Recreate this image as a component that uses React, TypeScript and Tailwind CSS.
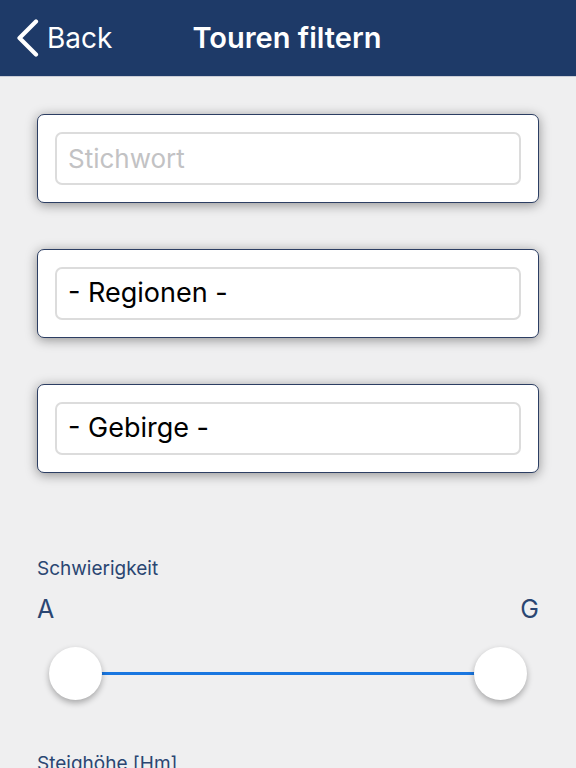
function FieldCard({ text, placeholder }: { text?: string; placeholder?: string }) {
  return (
    <div className="rounded-[7px] border-[1.5px] border-[#2c3e63] bg-white px-[17px] py-[17px] shadow-[0_2px_12px_rgba(0,0,0,0.4)]">
      <div className="flex h-[53px] items-center rounded-[7px] border-2 border-[#dcdcdc] px-[11px]">
        {text ? (
          <span className="text-[27px] text-black">{text}</span>
        ) : (
          <span className="text-[26px] text-[#c2c2c4]">{placeholder}</span>
        )}
      </div>
    </div>
  );
}

export default function App() {
  return (
    <div className="h-[768px] w-[576px] overflow-hidden bg-[#efeff0] font-['Inter',sans-serif]">
      {/* Header */}
      <header className="flex h-[77px] items-center border-b border-[#c9ccd6] bg-[#1e3a68] text-white">
        <div className="flex items-center pl-[16px]">
          <svg width="24" height="38" viewBox="0 0 24 38" fill="none">
            <polyline
              points="20,2.5 3.5,19 20,35.5"
              stroke="white"
              strokeWidth="4.2"
              strokeLinecap="round"
              strokeLinejoin="round"
            />
          </svg>
          <span className="ml-[7px] text-[28px]">Back</span>
        </div>
        <h1 className="ml-[80px] text-[29px] font-semibold">Touren filtern</h1>
      </header>

      <div className="px-[37px] pt-[37px]">
        <div className="flex flex-col gap-[46px]">
          <FieldCard placeholder="Stichwort" />
          <FieldCard text="- Regionen -" />
          <FieldCard text="- Gebirge -" />
        </div>

        {/* Schwierigkeit */}
        <div className="mt-[82px]">
          <p className="text-[19px] text-[#2a4672]">Schwierigkeit</p>
          <div className="mt-[7px] flex justify-between text-[25px] text-[#2a4672]">
            <span>A</span>
            <span>G</span>
          </div>
          <div className="relative mx-[12px] mt-[19px] h-[54px]">
            <div className="absolute left-[26px] right-[26px] top-[25px] h-[3px] bg-[#1976e0]" />
            <div className="absolute left-0 top-0 h-[53px] w-[53px] rounded-full bg-white shadow-[0_3px_6px_rgba(0,0,0,0.3)]" />
            <div className="absolute right-0 top-0 h-[53px] w-[53px] rounded-full bg-white shadow-[0_3px_6px_rgba(0,0,0,0.3)]" />
          </div>
        </div>

        <p className="mt-[49px] text-[19px] text-[#2a4672]">Steighöhe [Hm]</p>
      </div>
    </div>
  );
}
